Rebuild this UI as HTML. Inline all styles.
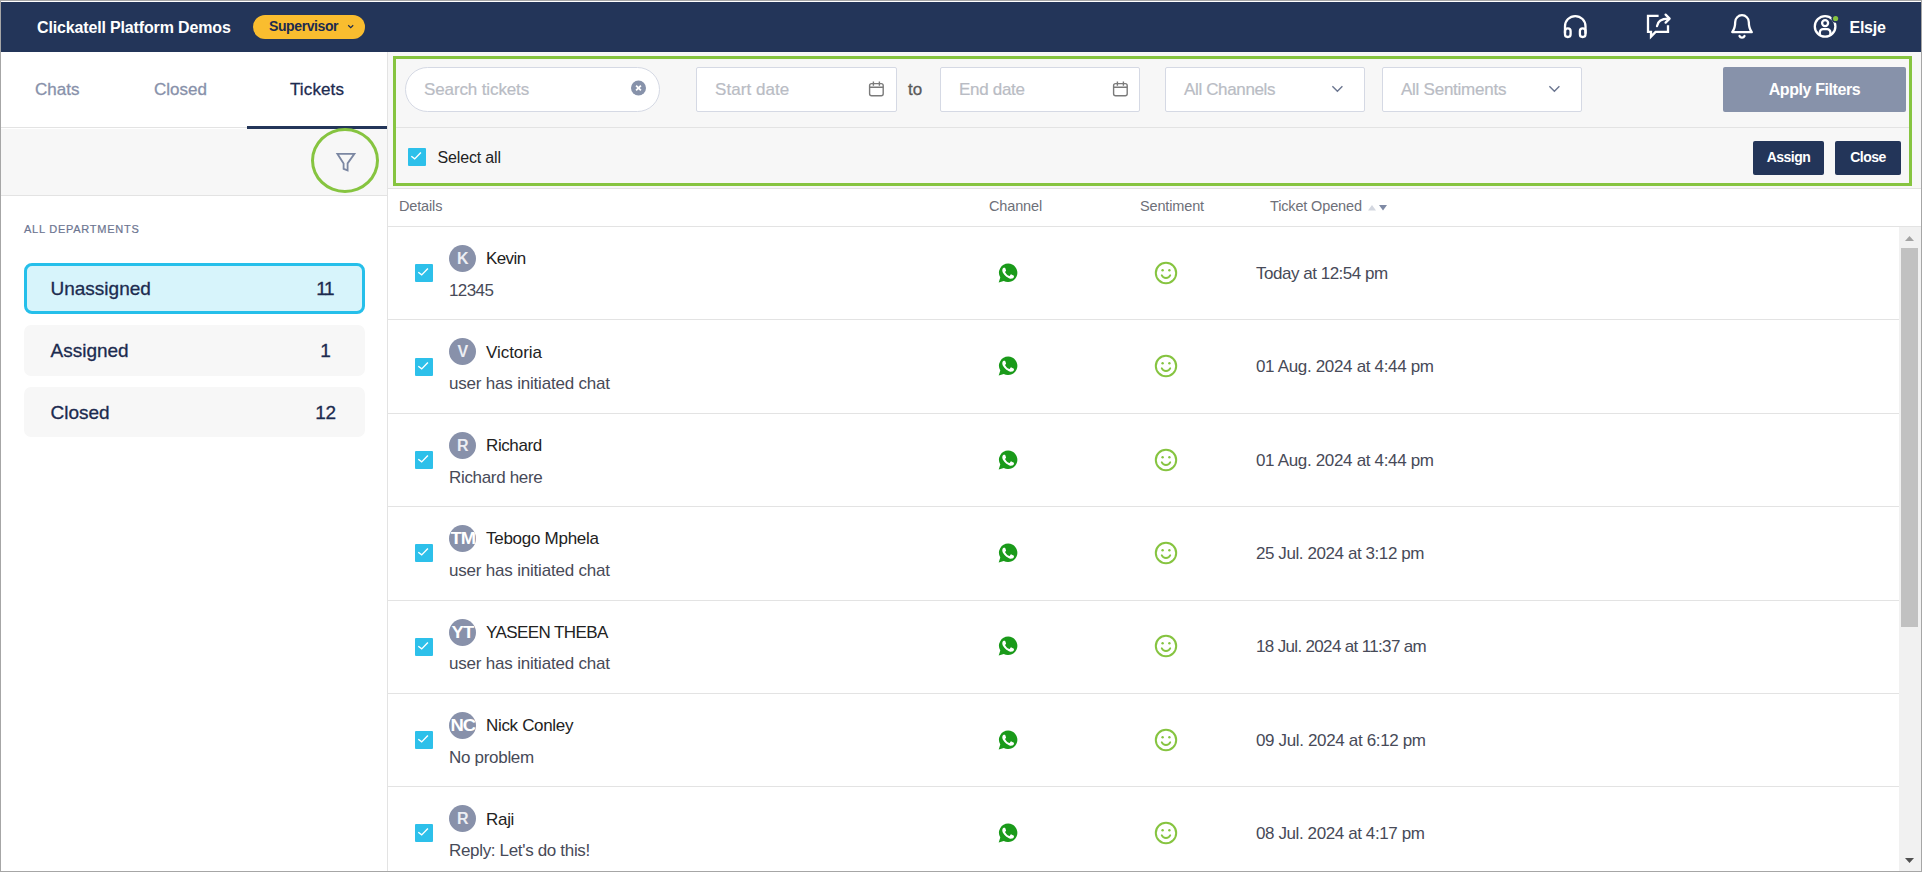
<!DOCTYPE html>
<html>
<head>
<meta charset="utf-8">
<title>Tickets</title>
<style>
*{box-sizing:border-box;margin:0;padding:0}
html,body{width:1922px;height:872px;overflow:hidden;background:#fff}
body{font-family:"Liberation Sans",sans-serif;position:relative;color:#1c2b4f}
.abs{position:absolute}
#frame{position:absolute;left:0;top:0;width:1922px;height:872px;border:1px solid #a6a6a6;z-index:50;pointer-events:none}
#topbar{position:absolute;left:1px;top:2px;width:1920px;height:50px;background:#233559}
#brand{position:absolute;left:37px;top:18px;font-size:16px;font-weight:bold;color:#fff;letter-spacing:-0.15px;white-space:nowrap;line-height:20px}
#role{position:absolute;left:253px;top:14.5px;width:112px;height:24.5px;border-radius:12.25px;background:#f9bd2f;color:#1c2b4f;font-size:14px;font-weight:bold;line-height:22px;padding-left:16px;letter-spacing:-0.4px;white-space:nowrap}
#user{position:absolute;left:1849.5px;top:18px;font-size:16px;font-weight:bold;color:#fff;letter-spacing:-0.25px;line-height:20px}
/* sidebar */
#side{position:absolute;left:1px;top:52px;width:387px;height:819px;background:#fff;border-right:1px solid #e3e3e3}
.tab{position:absolute;top:80px;font-size:17px;line-height:20px;color:#8891aa;letter-spacing:0px;-webkit-text-stroke:0.3px currentColor;white-space:nowrap}
#tabline{position:absolute;left:1px;top:127px;width:386px;height:1px;background:#e3e3e3}
#tabactive{position:absolute;left:247px;top:126px;width:140px;height:3px;background:#233559}
#sidefilter{position:absolute;left:1px;top:129px;width:386px;height:67px;background:#f7f7f7;border-bottom:1px solid #e3e3e3}
#fcircle{position:absolute;left:311px;top:128px;width:68px;height:65px;border:3px solid #86c440;border-radius:50%}
#alldep{position:absolute;left:24px;top:222px;font-size:11px;line-height:14px;letter-spacing:0.75px;color:#6c7591;white-space:nowrap;-webkit-text-stroke:0.2px #6c7591}
.dep{position:absolute;left:24px;width:341px;height:50.5px;border-radius:7px;background:#f7f7f7;font-size:19px;color:#1c2b4f;white-space:nowrap;letter-spacing:0px}
.dep span{position:absolute;top:15px;line-height:22px;-webkit-text-stroke:0.3px #1c2b4f}
.dep .l{left:26.5px}
.dep .r{left:281.4px;width:40px;text-align:center;letter-spacing:-0.5px}
.dep.sel{background:#d7f4fb;border:3px solid #25bfea;border-radius:8px;height:51px}
.dep.sel span{top:12.2px}
.dep.sel .l{left:23.5px}
.dep.sel .r{left:278.4px}
/* filter bar */
#fbar{position:absolute;left:388px;top:52px;width:1533px;height:137px;background:#f7f7f7;border-bottom:1px solid #e3e3e3}
#fdiv{position:absolute;left:396px;top:127px;width:1513px;height:1px;background:#e3e3e3}
#green{position:absolute;left:393px;top:56px;width:1519px;height:130px;border:3px solid #86c440}
.inp{position:absolute;top:67px;height:45px;background:#fff;border:1px solid #d5d9e4;border-radius:2px;font-size:17px;color:#b9bcc4;line-height:43px;padding-left:18px;white-space:nowrap;letter-spacing:0.05px;-webkit-text-stroke:0.2px #b9bcc4}
#search{left:405px;width:255px;border-radius:23px}
#apply{position:absolute;left:1723px;top:67px;width:183px;height:45px;background:#8792aa;border-radius:2px;color:#fff;font-size:16px;font-weight:bold;text-align:center;line-height:45px;letter-spacing:-0.4px}
.btn{position:absolute;top:141px;height:34px;background:#233559;border-radius:2px;color:#fff;font-size:14px;font-weight:bold;text-align:center;line-height:33px;letter-spacing:-0.5px}
.cb{position:absolute;width:18px;height:18px;background:#2dc0ea;border-radius:1px}
.cb svg{position:absolute;left:0;top:0}
#selall{position:absolute;left:437.5px;top:147px;font-size:16px;line-height:22px;color:#222;white-space:nowrap;letter-spacing:-0.15px}
/* table */
.th{position:absolute;top:198px;font-size:14.5px;line-height:17px;color:#6e7079;white-space:nowrap;letter-spacing:-0.15px}
.hl{position:absolute;left:388px;height:1px;background:#e3e3e3}
.row{position:absolute;left:388px;width:1511px;height:94px}
.av{position:absolute;left:61px;width:27px;height:27px;border-radius:50%;background:#8891aa;color:#eceef3;font-size:16px;font-weight:bold;text-align:center;line-height:28px;letter-spacing:-0.8px;overflow:hidden}
.nm{position:absolute;left:98px;font-size:17px;line-height:20px;color:#222;white-space:nowrap;letter-spacing:-0.2px}
.msg{position:absolute;left:61px;font-size:17px;line-height:20px;color:#474a58;white-space:nowrap;letter-spacing:-0.2px}
.dt{position:absolute;left:868px;font-size:17px;line-height:20px;color:#474a58;white-space:nowrap;letter-spacing:-0.3px}
/* scrollbar */
#track{position:absolute;left:1899px;top:227px;width:22px;height:644px;background:#f1f1f1}
#thumb{position:absolute;left:1901px;top:248px;width:17px;height:379px;background:#c1c1c1}
</style>
</head>
<body>
<div id="topbar"></div>
<div id="brand">Clickatell Platform Demos</div>
<div id="role">Supervisor</div>
<div id="user">Elsje</div>

<div id="side"></div>
<div class="tab" style="left:35px">Chats</div>
<div class="tab" style="left:154px">Closed</div>
<div class="tab" style="left:290px;color:#1c2b4f;letter-spacing:0.12px">Tickets</div>
<div id="tabline"></div>
<div id="sidefilter"></div>
<div id="tabactive"></div>
<div id="fcircle"></div>
<div id="alldep">ALL DEPARTMENTS</div>
<div class="dep sel" style="top:262.8px"><span class="l">Unassigned</span><span class="r" style="letter-spacing:-1.3px;text-indent:-1.3px">11</span></div>
<div class="dep" style="top:325.2px"><span class="l">Assigned</span><span class="r">1</span></div>
<div class="dep" style="top:387px;height:49.6px"><span class="l">Closed</span><span class="r">12</span></div>

<div id="fbar"></div>
<div id="fdiv"></div>
<div id="green"></div>
<div class="inp" id="search" style="letter-spacing:-0.12px">Search tickets</div>
<div class="inp" style="left:696px;width:201px">Start date</div>
<div class="abs" style="left:908px;top:80px;font-size:17px;line-height:20px;color:#5a5a5a;-webkit-text-stroke:0.3px #5a5a5a">to</div>
<div class="inp" style="left:940px;width:200px;letter-spacing:-0.3px">End date</div>
<div class="inp" style="left:1165px;width:200px;letter-spacing:-0.36px">All Channels</div>
<div class="inp" style="left:1382px;width:200px;letter-spacing:-0.25px">All Sentiments</div>
<div id="apply">Apply Filters</div>
<div class="cb" style="left:408px;top:148px"><svg width="18" height="18" viewBox="0 0 18 18"><path d="M3.3 8.2 L6.7 10.9 L12.9 4.4" fill="none" stroke="#fff" stroke-width="1.4"/></svg></div>
<div id="selall">Select all</div>
<div class="btn" style="left:1753px;width:71px">Assign</div>
<div class="btn" style="left:1835px;width:66px">Close</div>

<div class="th" style="left:399px">Details</div>
<div class="th" style="left:989px">Channel</div>
<div class="th" style="left:1140px">Sentiment</div>
<div class="th" style="left:1270px">Ticket Opened</div>
<div class="hl" style="top:226px;width:1533px"></div>

<div class="row" style="top:226px">
<div class="cb" style="left:27px;top:38px"><svg width="18" height="18" viewBox="0 0 18 18"><path d="M3.3 8.2 L6.7 10.9 L12.9 4.4" fill="none" stroke="#fff" stroke-width="1.4"/></svg></div>
<div class="av" style="top:19px">K</div>
<div class="nm" style="top:23px;letter-spacing:-0.6px">Kevin</div>
<div class="msg" style="top:55px;letter-spacing:-0.6px">12345</div>
<svg class="abs" style="left:610px;top:37.4px" width="20" height="20" viewBox="0 0 20 20"><path d="M10.2 0.6a9.2 9.2 0 0 0-7.9 13.9L0.7 19.4l5.1-1.5A9.2 9.2 0 1 0 10.2 0.6z" fill="#1a9a1a"/><path d="M7.3 5.2c-.2-.5-.4-.5-.6-.5h-.6c-.2 0-.5.1-.8.4-.3.3-1 1-1 2.400s1 2.800 1.200 3c.1.200 2 3.200 5 4.400 2.400 1 2.900.8 3.400.7.500 0 1.700-.7 1.900-1.400.2-.7.2-1.200.2-1.400-.1-.1-.3-.2-.6-.4l-2-1c-.3-.1-.5-.1-.7.200l-.9 1.200c-.2.200-.3.200-.6.100-.3-.2-1.300-.5-2.400-1.500-.9-.8-1.500-1.800-1.700-2.100-.2-.3 0-.5.100-.6l.5-.5c.1-.2.2-.3.300-.5.1-.2 0-.4 0-.5z" fill="#fff"/></svg>
<svg class="abs" style="left:766px;top:35.4px" width="24" height="24" viewBox="0 0 24 24"><circle cx="12" cy="12" r="10.2" fill="none" stroke="#86c440" stroke-width="2"/><circle cx="8.6" cy="9.2" r="1.2" fill="#86c440"/><circle cx="15.4" cy="9.2" r="1.2" fill="#86c440"/><path d="M7.7 14.2a4.7 4.7 0 0 0 8.6 0" fill="none" stroke="#86c440" stroke-width="1.8" stroke-linecap="round"/></svg>
<div class="dt" style="top:38px;letter-spacing:-0.48px">Today at 12:54 pm</div>
</div>
<div class="hl" style="top:319px;width:1511px"></div>
<div class="row" style="top:319px">
<div class="cb" style="left:27px;top:39px"><svg width="18" height="18" viewBox="0 0 18 18"><path d="M3.3 8.2 L6.7 10.9 L12.9 4.4" fill="none" stroke="#fff" stroke-width="1.4"/></svg></div>
<div class="av" style="top:19px">V</div>
<div class="nm" style="top:24px;letter-spacing:-0.06px">Victoria</div>
<div class="msg" style="top:55px;letter-spacing:-0.2px">user has initiated chat</div>
<svg class="abs" style="left:610px;top:37.4px" width="20" height="20" viewBox="0 0 20 20"><path d="M10.2 0.6a9.2 9.2 0 0 0-7.9 13.9L0.7 19.4l5.1-1.5A9.2 9.2 0 1 0 10.2 0.6z" fill="#1a9a1a"/><path d="M7.3 5.2c-.2-.5-.4-.5-.6-.5h-.6c-.2 0-.5.1-.8.4-.3.3-1 1-1 2.400s1 2.800 1.200 3c.1.200 2 3.200 5 4.400 2.400 1 2.900.8 3.400.7.500 0 1.700-.7 1.900-1.400.2-.7.2-1.200.2-1.400-.1-.1-.3-.2-.6-.4l-2-1c-.3-.1-.5-.1-.7.200l-.9 1.200c-.2.200-.3.200-.6.100-.3-.2-1.300-.5-2.400-1.500-.9-.8-1.500-1.800-1.700-2.100-.2-.3 0-.5.100-.6l.5-.5c.1-.2.2-.3.300-.5.1-.2 0-.4 0-.5z" fill="#fff"/></svg>
<svg class="abs" style="left:766px;top:35.4px" width="24" height="24" viewBox="0 0 24 24"><circle cx="12" cy="12" r="10.2" fill="none" stroke="#86c440" stroke-width="2"/><circle cx="8.6" cy="9.2" r="1.2" fill="#86c440"/><circle cx="15.4" cy="9.2" r="1.2" fill="#86c440"/><path d="M7.7 14.2a4.7 4.7 0 0 0 8.6 0" fill="none" stroke="#86c440" stroke-width="1.8" stroke-linecap="round"/></svg>
<div class="dt" style="top:38px;letter-spacing:-0.33px">01 Aug. 2024 at 4:44 pm</div>
</div>
<div class="hl" style="top:413px;width:1511px"></div>
<div class="row" style="top:413px">
<div class="cb" style="left:27px;top:38px"><svg width="18" height="18" viewBox="0 0 18 18"><path d="M3.3 8.2 L6.7 10.9 L12.9 4.4" fill="none" stroke="#fff" stroke-width="1.4"/></svg></div>
<div class="av" style="top:19px">R</div>
<div class="nm" style="top:23px;letter-spacing:-0.4px">Richard</div>
<div class="msg" style="top:55px;letter-spacing:-0.33px">Richard here</div>
<svg class="abs" style="left:610px;top:37.4px" width="20" height="20" viewBox="0 0 20 20"><path d="M10.2 0.6a9.2 9.2 0 0 0-7.9 13.9L0.7 19.4l5.1-1.5A9.2 9.2 0 1 0 10.2 0.6z" fill="#1a9a1a"/><path d="M7.3 5.2c-.2-.5-.4-.5-.6-.5h-.6c-.2 0-.5.1-.8.4-.3.3-1 1-1 2.400s1 2.800 1.200 3c.1.200 2 3.200 5 4.400 2.400 1 2.900.8 3.400.7.500 0 1.700-.7 1.900-1.400.2-.7.2-1.200.2-1.400-.1-.1-.3-.2-.6-.4l-2-1c-.3-.1-.5-.1-.7.200l-.9 1.200c-.2.200-.3.200-.6.100-.3-.2-1.300-.5-2.400-1.500-.9-.8-1.500-1.800-1.700-2.100-.2-.3 0-.5.100-.6l.5-.5c.1-.2.2-.3.300-.5.1-.2 0-.4 0-.5z" fill="#fff"/></svg>
<svg class="abs" style="left:766px;top:35.4px" width="24" height="24" viewBox="0 0 24 24"><circle cx="12" cy="12" r="10.2" fill="none" stroke="#86c440" stroke-width="2"/><circle cx="8.6" cy="9.2" r="1.2" fill="#86c440"/><circle cx="15.4" cy="9.2" r="1.2" fill="#86c440"/><path d="M7.7 14.2a4.7 4.7 0 0 0 8.6 0" fill="none" stroke="#86c440" stroke-width="1.8" stroke-linecap="round"/></svg>
<div class="dt" style="top:38px;letter-spacing:-0.33px">01 Aug. 2024 at 4:44 pm</div>
</div>
<div class="hl" style="top:506px;width:1511px"></div>
<div class="row" style="top:506px">
<div class="cb" style="left:27px;top:38px"><svg width="18" height="18" viewBox="0 0 18 18"><path d="M3.3 8.2 L6.7 10.9 L12.9 4.4" fill="none" stroke="#fff" stroke-width="1.4"/></svg></div>
<div class="av" style="top:19px"><span style="display:inline-block;transform:scaleX(1.15);transform-origin:50% 50%;color:#fff">TM</span></div>
<div class="nm" style="top:23px;letter-spacing:-0.27px">Tebogo Mphela</div>
<div class="msg" style="top:55px;letter-spacing:-0.2px">user has initiated chat</div>
<svg class="abs" style="left:610px;top:37.4px" width="20" height="20" viewBox="0 0 20 20"><path d="M10.2 0.6a9.2 9.2 0 0 0-7.9 13.9L0.7 19.4l5.1-1.5A9.2 9.2 0 1 0 10.2 0.6z" fill="#1a9a1a"/><path d="M7.3 5.2c-.2-.5-.4-.5-.6-.5h-.6c-.2 0-.5.1-.8.4-.3.3-1 1-1 2.400s1 2.800 1.200 3c.1.200 2 3.200 5 4.400 2.400 1 2.900.8 3.400.7.500 0 1.700-.7 1.900-1.400.2-.7.2-1.200.2-1.400-.1-.1-.3-.2-.6-.4l-2-1c-.3-.1-.5-.1-.7.200l-.9 1.200c-.2.200-.3.200-.6.100-.3-.2-1.300-.5-2.400-1.500-.9-.8-1.500-1.800-1.700-2.100-.2-.3 0-.5.100-.6l.5-.5c.1-.2.2-.3.300-.5.1-.2 0-.4 0-.5z" fill="#fff"/></svg>
<svg class="abs" style="left:766px;top:35.4px" width="24" height="24" viewBox="0 0 24 24"><circle cx="12" cy="12" r="10.2" fill="none" stroke="#86c440" stroke-width="2"/><circle cx="8.6" cy="9.2" r="1.2" fill="#86c440"/><circle cx="15.4" cy="9.2" r="1.2" fill="#86c440"/><path d="M7.7 14.2a4.7 4.7 0 0 0 8.6 0" fill="none" stroke="#86c440" stroke-width="1.8" stroke-linecap="round"/></svg>
<div class="dt" style="top:38px;letter-spacing:-0.42px">25 Jul. 2024 at 3:12 pm</div>
</div>
<div class="hl" style="top:600px;width:1511px"></div>
<div class="row" style="top:600px">
<div class="cb" style="left:27px;top:38px"><svg width="18" height="18" viewBox="0 0 18 18"><path d="M3.3 8.2 L6.7 10.9 L12.9 4.4" fill="none" stroke="#fff" stroke-width="1.4"/></svg></div>
<div class="av" style="top:19px"><span style="display:inline-block;transform:scaleX(1.15);transform-origin:50% 50%;color:#fff">YT</span></div>
<div class="nm" style="top:23px;letter-spacing:-0.58px">YASEEN THEBA</div>
<div class="msg" style="top:54px;letter-spacing:-0.2px">user has initiated chat</div>
<svg class="abs" style="left:610px;top:36.4px" width="20" height="20" viewBox="0 0 20 20"><path d="M10.2 0.6a9.2 9.2 0 0 0-7.9 13.9L0.7 19.4l5.1-1.5A9.2 9.2 0 1 0 10.2 0.6z" fill="#1a9a1a"/><path d="M7.3 5.2c-.2-.5-.4-.5-.6-.5h-.6c-.2 0-.5.1-.8.4-.3.3-1 1-1 2.400s1 2.800 1.200 3c.1.200 2 3.200 5 4.400 2.400 1 2.900.8 3.400.7.500 0 1.700-.7 1.900-1.400.2-.7.2-1.200.2-1.400-.1-.1-.3-.2-.6-.4l-2-1c-.3-.1-.5-.1-.7.200l-.9 1.200c-.2.200-.3.200-.6.100-.3-.2-1.300-.5-2.400-1.500-.9-.8-1.500-1.800-1.700-2.100-.2-.3 0-.5.100-.6l.5-.5c.1-.2.2-.3.300-.5.1-.2 0-.4 0-.5z" fill="#fff"/></svg>
<svg class="abs" style="left:766px;top:34.4px" width="24" height="24" viewBox="0 0 24 24"><circle cx="12" cy="12" r="10.2" fill="none" stroke="#86c440" stroke-width="2"/><circle cx="8.6" cy="9.2" r="1.2" fill="#86c440"/><circle cx="15.4" cy="9.2" r="1.2" fill="#86c440"/><path d="M7.7 14.2a4.7 4.7 0 0 0 8.6 0" fill="none" stroke="#86c440" stroke-width="1.8" stroke-linecap="round"/></svg>
<div class="dt" style="top:37px;letter-spacing:-0.66px">18 Jul. 2024 at 11:37 am</div>
</div>
<div class="hl" style="top:693px;width:1511px"></div>
<div class="row" style="top:693px">
<div class="cb" style="left:27px;top:38px"><svg width="18" height="18" viewBox="0 0 18 18"><path d="M3.3 8.2 L6.7 10.9 L12.9 4.4" fill="none" stroke="#fff" stroke-width="1.4"/></svg></div>
<div class="av" style="top:19px"><span style="display:inline-block;transform:scaleX(1.15);transform-origin:50% 50%;color:#fff">NC</span></div>
<div class="nm" style="top:23px;letter-spacing:-0.33px">Nick Conley</div>
<div class="msg" style="top:55px;letter-spacing:-0.3px">No problem</div>
<svg class="abs" style="left:610px;top:37.4px" width="20" height="20" viewBox="0 0 20 20"><path d="M10.2 0.6a9.2 9.2 0 0 0-7.9 13.9L0.7 19.4l5.1-1.5A9.2 9.2 0 1 0 10.2 0.6z" fill="#1a9a1a"/><path d="M7.3 5.2c-.2-.5-.4-.5-.6-.5h-.6c-.2 0-.5.1-.8.4-.3.3-1 1-1 2.400s1 2.800 1.200 3c.1.200 2 3.200 5 4.400 2.400 1 2.900.8 3.400.7.500 0 1.700-.7 1.900-1.400.2-.7.2-1.200.2-1.400-.1-.1-.3-.2-.6-.4l-2-1c-.3-.1-.5-.1-.7.200l-.9 1.200c-.2.200-.3.200-.6.100-.3-.2-1.300-.5-2.400-1.500-.9-.8-1.500-1.800-1.700-2.100-.2-.3 0-.5.100-.6l.5-.5c.1-.2.2-.3.300-.5.1-.2 0-.4 0-.5z" fill="#fff"/></svg>
<svg class="abs" style="left:766px;top:35.4px" width="24" height="24" viewBox="0 0 24 24"><circle cx="12" cy="12" r="10.2" fill="none" stroke="#86c440" stroke-width="2"/><circle cx="8.6" cy="9.2" r="1.2" fill="#86c440"/><circle cx="15.4" cy="9.2" r="1.2" fill="#86c440"/><path d="M7.7 14.2a4.7 4.7 0 0 0 8.6 0" fill="none" stroke="#86c440" stroke-width="1.8" stroke-linecap="round"/></svg>
<div class="dt" style="top:38px;letter-spacing:-0.35px">09 Jul. 2024 at 6:12 pm</div>
</div>
<div class="hl" style="top:786px;width:1511px"></div>
<div class="row" style="top:786px">
<div class="cb" style="left:27px;top:38px"><svg width="18" height="18" viewBox="0 0 18 18"><path d="M3.3 8.2 L6.7 10.9 L12.9 4.4" fill="none" stroke="#fff" stroke-width="1.4"/></svg></div>
<div class="av" style="top:19px">R</div>
<div class="nm" style="top:24px;letter-spacing:-0.3px">Raji</div>
<div class="msg" style="top:55px;letter-spacing:-0.33px">Reply: Let's do this!</div>
<svg class="abs" style="left:610px;top:37.4px" width="20" height="20" viewBox="0 0 20 20"><path d="M10.2 0.6a9.2 9.2 0 0 0-7.9 13.9L0.7 19.4l5.1-1.5A9.2 9.2 0 1 0 10.2 0.6z" fill="#1a9a1a"/><path d="M7.3 5.2c-.2-.5-.4-.5-.6-.5h-.6c-.2 0-.5.1-.8.4-.3.3-1 1-1 2.400s1 2.800 1.200 3c.1.200 2 3.200 5 4.400 2.400 1 2.900.8 3.400.7.500 0 1.700-.7 1.900-1.400.2-.7.2-1.200.2-1.400-.1-.1-.3-.2-.6-.4l-2-1c-.3-.1-.5-.1-.7.200l-.9 1.200c-.2.200-.3.200-.6.100-.3-.2-1.300-.5-2.400-1.500-.9-.8-1.500-1.800-1.700-2.100-.2-.3 0-.5.100-.6l.5-.5c.1-.2.2-.3.300-.5.1-.2 0-.4 0-.5z" fill="#fff"/></svg>
<svg class="abs" style="left:766px;top:35.4px" width="24" height="24" viewBox="0 0 24 24"><circle cx="12" cy="12" r="10.2" fill="none" stroke="#86c440" stroke-width="2"/><circle cx="8.6" cy="9.2" r="1.2" fill="#86c440"/><circle cx="15.4" cy="9.2" r="1.2" fill="#86c440"/><path d="M7.7 14.2a4.7 4.7 0 0 0 8.6 0" fill="none" stroke="#86c440" stroke-width="1.8" stroke-linecap="round"/></svg>
<div class="dt" style="top:38px;letter-spacing:-0.4px">08 Jul. 2024 at 4:17 pm</div>
</div>

<div id="track"></div>
<div id="thumb"></div>

<svg class="abs" style="left:0;top:0;z-index:5" width="1922" height="872" viewBox="0 0 1922 872" fill="none">
<!-- headphones -->
<g stroke="#fff" stroke-width="2.3" stroke-linecap="round" stroke-linejoin="round">
<path d="M1565 33V26.3a10.25 10.25 0 0 1 20.5 0V33"/>
<rect x="1565" y="28.4" width="5.6" height="8.6" rx="2.7"/>
<rect x="1579.9" y="28.4" width="5.6" height="8.6" rx="2.7"/>
<!-- chat share -->
<path d="M1658.6 15.8H1648V31.9H1651V36.6L1655.6 31.9H1668V25.2" stroke-linecap="butt" stroke-linejoin="miter"/>
<path d="M1657 26.2C1657.6 21.2 1661.4 18.6 1668.2 18.6"/>
<path d="M1665.6 14.6L1669.6 18.6L1665.6 22.6"/>
<!-- bell -->
<path d="M1732.2 32.1C1734.6 29 1735.2 26.6 1735.2 22a6.8 6.8 0 0 1 13.6 0C1748.8 26.6 1749.4 29 1751.8 32.1Z"/>
<path d="M1739.5 36a2.7 2.7 0 0 0 5 0"/>
<!-- user -->
<circle cx="1825.1" cy="26.4" r="10.3"/>
<circle cx="1825.1" cy="23.1" r="3"/>
<path d="M1819.8 34V32.4a3.2 3.2 0 0 1 3.2-3.2h4.2a3.2 3.2 0 0 1 3.2 3.2V34"/>
</g>
<circle cx="1835.6" cy="18.5" r="4.2" fill="#233559"/>
<circle cx="1835.6" cy="18.5" r="2.6" fill="#86c440"/>
<!-- supervisor chevron -->
<path d="M348.2 25.2L350.7 27.6L353.2 25.2" stroke="#1c2b4f" stroke-width="1.2"/>
<!-- funnel -->
<path d="M337.4 153.8H354.4L347.6 163.4V170.4L343.6 168.8V163.4Z" stroke="#7b87a2" stroke-width="1.8" stroke-linejoin="miter"/>
<!-- search clear -->
<circle cx="638.5" cy="88" r="7.5" fill="#8792aa"/>
<path d="M636.1 85.6L640.9 90.4M640.9 85.6L636.1 90.4" stroke="#fff" stroke-width="1.8"/>
<!-- calendars -->
<g stroke="#7a7a7a" stroke-width="1.4">
<rect x="869.6" y="83.6" width="13.6" height="12.2" rx="2"/><path d="M869.6 87.2H883.2M873.4 81.4V85.8M879.4 81.4V85.8"/>
<rect x="1113.6" y="83.6" width="13.6" height="12.2" rx="2"/><path d="M1113.6 87.2H1127.2M1117.4 81.4V85.8M1123.4 81.4V85.8"/>
</g>
<!-- select chevrons -->
<g stroke="#6b7690" stroke-width="1.4">
<path d="M1332.4 86.2L1337.4 91.2L1342.4 86.2"/>
<path d="M1549.4 86.2L1554.4 91.2L1559.4 86.2"/>
</g>
<!-- sort arrows -->
<path d="M1368 210.6L1372 205L1376 210.6Z" fill="#d3d7e0"/>
<path d="M1379 205H1387L1383 210.6Z" fill="#7f8aa5"/>
<!-- scrollbar arrows -->
<path d="M1905 241L1909.5 236L1914 241Z" fill="#a3a3a3"/>
<path d="M1905 858H1914L1909.5 863Z" fill="#505050"/>
</svg>
<div id="frame"></div>
</body>
</html>
